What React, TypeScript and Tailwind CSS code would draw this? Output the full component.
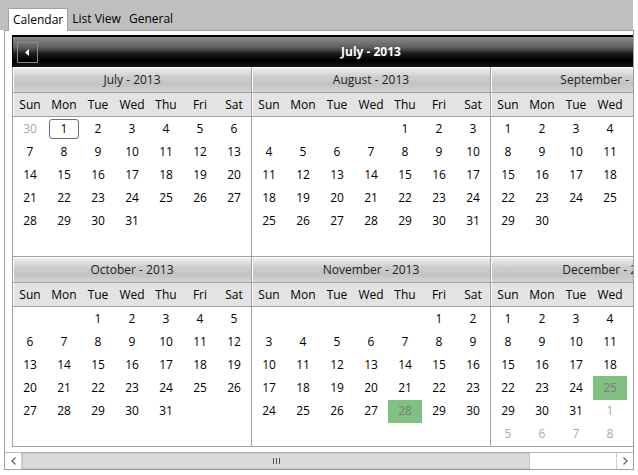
import React from 'react';

const DAY_NAMES = ['Sun', 'Mon', 'Tue', 'Wed', 'Thu', 'Fri', 'Sat'];
const MONTH_NAMES = [
  'January', 'February', 'March', 'April', 'May', 'June',
  'July', 'August', 'September', 'October', 'November', 'December',
];

interface DayCell {
  day: number;
  muted: boolean;
}

// months shown in the calendar, first one shows leading days, last one trailing
const SHOWN = [6, 7, 8, 9, 10, 11];
const YEAR = 2013;

// green highlighted dates (month index - day)
const HIGHLIGHTS = ['10-28', '11-25'];
const SELECTED = '6-1';

const buildMonth = (year: number, month: number, leading: boolean, trailing: boolean) => {
  const first = new Date(year, month, 1).getDay();
  const count = new Date(year, month + 1, 0).getDate();
  const prevCount = new Date(year, month, 0).getDate();
  const cells: (DayCell | null)[] = [];

  for (let i = 0; i < first; i++) {
    cells.push(leading ? { day: prevCount - first + 1 + i, muted: true } : null);
  }
  for (let d = 1; d <= count; d++) cells.push({ day: d, muted: false });
  let next = 1;
  while (cells.length < 42) {
    cells.push(trailing ? { day: next++, muted: true } : null);
  }
  return cells;
};

const MonthBlock = ({ month, index }: { month: number; index: number }) => {
  const cells = buildMonth(YEAR, month, index === 0, index === SHOWN.length - 1);

  return (
    <div className="w-[239px] border-r border-b border-[#a0a0a0]">
      <div className="flex h-[26px] items-center justify-center border-b border-[#a0a0a0] bg-[linear-gradient(to_bottom,#f2f2f2_0%,#cdcdcd_40%,#c3c3c3_70%,#d4d4d4_100%)] text-[#222] shadow-[inset_1px_1px_0_#ffffff]">
        {MONTH_NAMES[month]} - {YEAR}
      </div>
      <div className="grid h-[24px] grid-cols-[repeat(7,34px)] items-center border-b border-[#a0a0a0] bg-[#e3e3e3] text-black shadow-[inset_1px_0_0_#ffffff]">
        {DAY_NAMES.map((name) => (
          <span key={name} className="text-center">
            {name}
          </span>
        ))}
      </div>
      <div className="grid h-[139px] grid-cols-[repeat(7,34px)] grid-rows-6">
        {cells.map((cell, i) => {
          if (!cell) return <div key={i} />;
          const key = `${month}-${cell.day}`;
          const highlight = !cell.muted && HIGHLIGHTS.includes(key);
          const selected = !cell.muted && key === SELECTED;
          return (
            <div
              key={i}
              className={`flex items-center justify-center ${
                highlight
                  ? 'bg-[#80c080] text-[#7c7c7c]'
                  : cell.muted
                    ? 'text-[#a8a8a8]'
                    : 'text-black'
              }`}
            >
              {selected ? (
                <span className="flex h-[20px] w-[30px] items-center justify-center rounded-[3px] border border-[#6e6e6e]">
                  {cell.day}
                </span>
              ) : (
                cell.day
              )}
            </div>
          );
        })}
      </div>
    </div>
  );
};

const Calendar = () => (
  <div className="w-[718px] shrink-0">
    <div className="grid h-[32px] grid-cols-[30px_1fr_30px] items-center border-x border-t-2 border-black bg-[linear-gradient(to_bottom,#8c8c8c_0%,#5e5e5e_35%,#1c1c1c_55%,#000000_78%,#141414_100%)]">
      <button className="ml-[4px] flex h-[21px] w-[21px] items-center justify-center border border-[#8a8a8a]">
        <svg width="5" height="7" viewBox="0 0 5 7">
          <path d="M4 0 L0 3.5 L4 7 Z" fill="#ffffff" />
        </svg>
      </button>
      <span className="text-center font-bold text-white">
        {MONTH_NAMES[SHOWN[0]]} - {YEAR}
      </span>
      <span />
    </div>
    <div className="grid grid-cols-[repeat(3,239px)] border-l border-[#a0a0a0]">
      {SHOWN.map((m, i) => (
        <MonthBlock key={m} month={m} index={i} />
      ))}
    </div>
  </div>
);

const ScrollBar = () => (
  <div className="flex h-[17px] border-t border-[#b4b4b4] bg-white">
    <div className="flex w-[17px] items-center justify-center border-r border-[#d0d0d0]">
      <svg width="5" height="8" viewBox="0 0 5 8">
        <path d="M4.5 0.5 L1 4 L4.5 7.5" fill="none" stroke="#606060" strokeWidth="1.2" />
      </svg>
    </div>
    <div className="flex w-[508px] items-center justify-center border border-[#c4c4c4] bg-[#dadada]">
      <div className="flex gap-[2px]">
        <span className="h-[6px] w-[1px] bg-[#505050]" />
        <span className="h-[6px] w-[1px] bg-[#505050]" />
        <span className="h-[6px] w-[1px] bg-[#505050]" />
      </div>
    </div>
    <div className="flex-1" />
    <div className="flex w-[17px] items-center justify-center border-l border-[#d0d0d0]">
      <svg width="5" height="8" viewBox="0 0 5 8">
        <path d="M0.5 0.5 L4 4 L0.5 7.5" fill="none" stroke="#606060" strokeWidth="1.2" />
      </svg>
    </div>
  </div>
);

export default function App() {
  const tabs = ['Calendar', 'List View', 'General'];

  return (
    <div className="h-[475px] w-[638px] overflow-hidden bg-white font-['Open_Sans',sans-serif] text-[12px] leading-none">
      <div className="flex h-[30px] w-[633px] items-end bg-[#bfbfbf] pl-[8px]">
        {tabs.map((tab, i) =>
          i === 0 ? (
            <div
              key={tab}
              className="relative z-10 -mb-px flex h-[23px] items-center rounded-t-[2px] border border-b-0 border-[#a0a0a0] bg-white px-[4px] text-black"
            >
              {tab}
            </div>
          ) : (
            <div key={tab} className="flex h-[22px] items-center px-[4px] text-black">
              {tab}
            </div>
          ),
        )}
      </div>
      <div className="ml-[4px] flex h-[440px] w-[630px] flex-col border border-[#a0a0a0] bg-white">
        <div className="flex h-[421px] overflow-hidden pl-[7px] pt-[4px]">
          <Calendar />
        </div>
        <ScrollBar />
      </div>
    </div>
  );
}
